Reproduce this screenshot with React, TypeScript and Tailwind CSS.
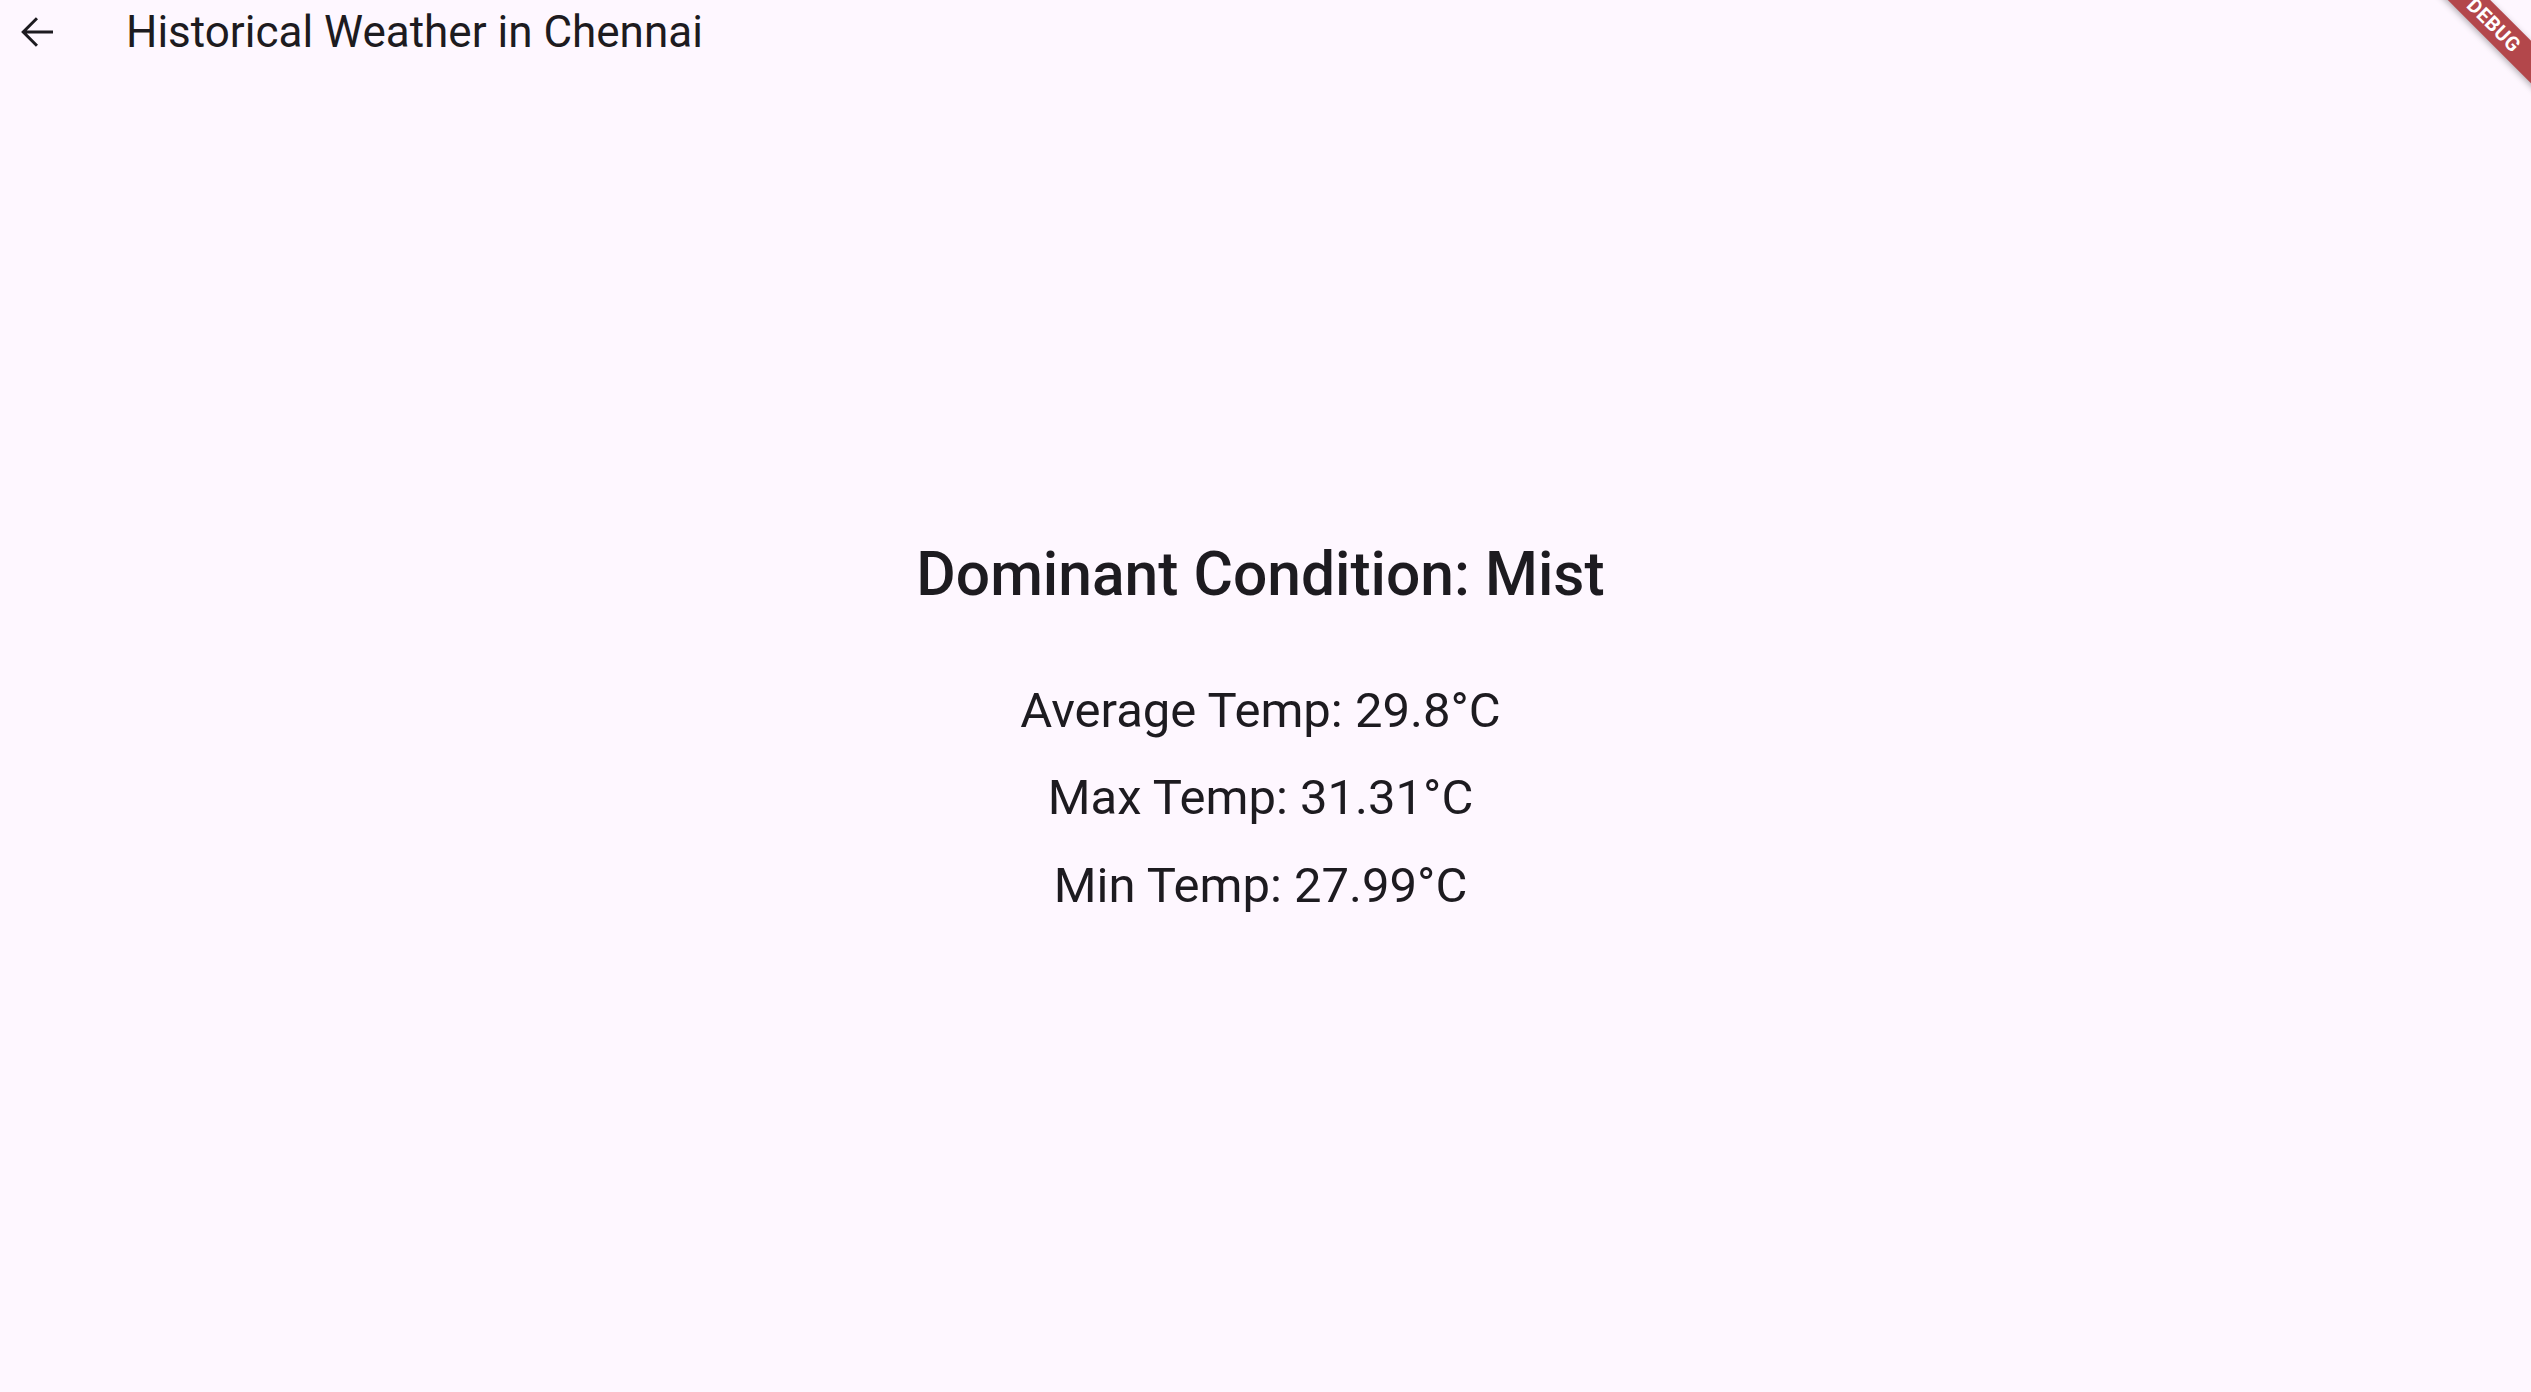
import { useState } from "react";

interface Summary {
  city: string;
  condition: string;
  avg: number;
  max: number;
  min: number;
}

const summary: Summary = {
  city: "Chennai",
  condition: "Mist",
  avg: 29.8,
  max: 31.31,
  min: 27.99,
};

function BackArrow() {
  return (
    <svg viewBox="0 0 24 24" className="h-[48px] w-[48px]" fill="#1d1b20">
      <path d="M20 11.25H6.9l5.6-5.6L11.45 4.6 4.05 12l7.4 7.4 1.05-1.05-5.6-5.6H20v-1.5z" />
    </svg>
  );
}

// Flutter-style debug ribbon in the top right corner
function DebugBanner() {
  return (
    <div className="pointer-events-none absolute right-0 top-0 h-[120px] w-[120px] overflow-hidden">
      <div className="absolute left-[-17px] top-[10px] flex h-[30px] w-[200px] rotate-45 items-center justify-center bg-[#b3474b] shadow-[0_2px_6px_rgba(0,0,0,0.3)]">
        <span className="font-['Roboto',sans-serif] text-[20px] font-bold leading-none tracking-[0.5px] text-white">
          DEBUG
        </span>
      </div>
    </div>
  );
}

export default function App() {
  const [data] = useState(summary);

  return (
    <div className="relative flex min-h-screen flex-col bg-[#fef7ff] font-['Roboto',sans-serif] text-[#1d1b20]">
      <header className="flex h-[64px] shrink-0 items-center">
        <button type="button" className="ml-[13px] flex h-[48px] w-[48px] items-center justify-center">
          <BackArrow />
        </button>
        <h1 className="ml-[65px] text-[44px] font-normal leading-[64px]">Historical Weather in {data.city}</h1>
      </header>

      <main className="flex flex-1 flex-col items-center justify-center pr-[10px] pt-[13px]">
        <h2 className="text-[60.5px] font-medium leading-[70px]">Dominant Condition: {data.condition}</h2>
        <div className="mt-[57px] flex flex-col items-center text-[49px] leading-[87.5px]">
          <p>Average Temp: {data.avg}°C</p>
          <p>Max Temp: {data.max}°C</p>
          <p>Min Temp: {data.min}°C</p>
        </div>
      </main>

      <DebugBanner />
    </div>
  );
}
